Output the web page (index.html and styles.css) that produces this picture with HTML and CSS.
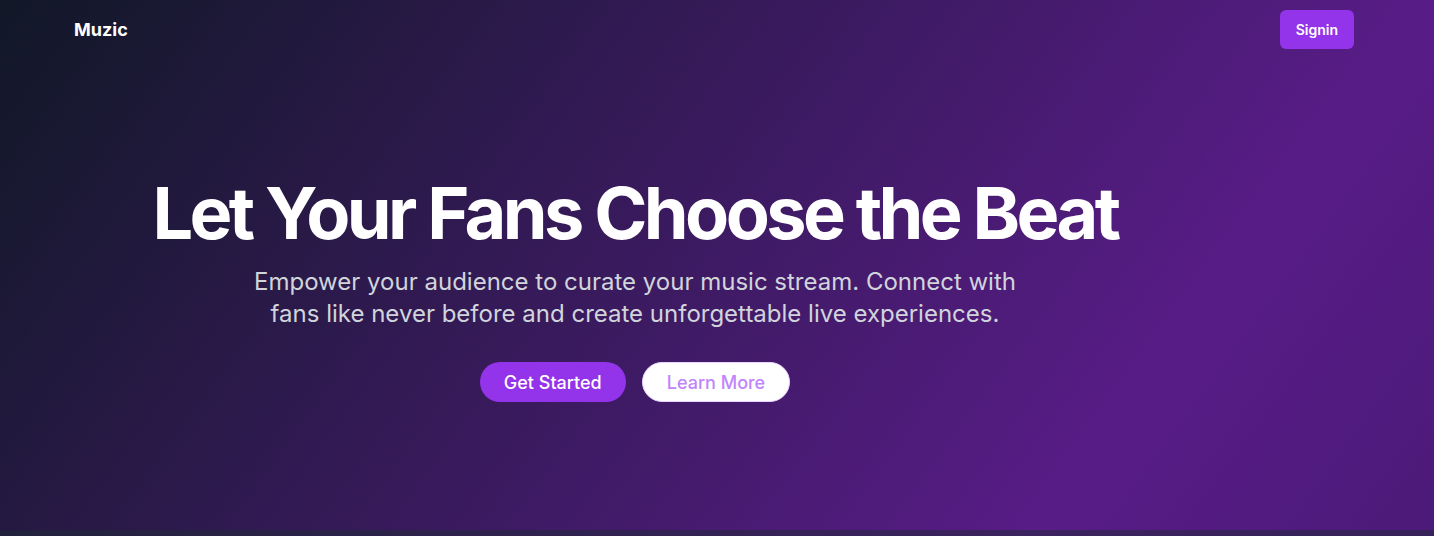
FILE: index.html
```html
<!DOCTYPE html>
<html lang="en">
<head>
<meta charset="utf-8">
<title>Muzic</title>
<link rel="stylesheet" href="styles.css">
</head>
<body>
<div class="page">
  <header class="header">
    <a class="logo" href="#">Muzic</a>
    <button class="signin">Signin</button>
  </header>
  <main class="hero">
    <div class="hero-inner">
      <h1 class="title">Let Your Fans Choose the Beat</h1>
      <p class="subtitle">Empower your audience to curate your music stream. Connect with fans like never before and create unforgettable live experiences.</p>
      <div class="actions">
        <button class="btn btn-primary">Get Started</button>
        <button class="btn btn-outline">Learn More</button>
      </div>
    </div>
  </main>
  <section class="features"></section>
</div>
</body>
</html>
```
FILE: styles.css
```css
* { box-sizing: border-box; }
html, body { margin: 0; padding: 0; }
body {
  font-family: Inter, "Noto Sans", sans-serif;
  color: #fff;
  background: #111827;
}
.page {
  min-height: 1954px;
  background: linear-gradient(to bottom right, #111827 0%, #581c87 50%, #2a1552 100%);
}
.header {
  height: 59px;
  display: flex;
  align-items: center;
  justify-content: space-between;
  padding: 0 80px 0 74px;
}
.logo {
  font-size: 18px;
  line-height: 28px;
  font-weight: 700;
  color: #fff;
  text-decoration: none;
}
.signin {
  height: 39px;
  padding: 0 16px;
  border: none;
  border-radius: 6px;
  background: #9333ea;
  color: #fff;
  font-family: inherit;
  font-size: 14px;
  font-weight: 600;
}
.hero {
  height: 471px;
  padding-right: 164px;
}
.hero-inner {
  display: flex;
  flex-direction: column;
  align-items: center;
  text-align: center;
  padding-top: 118px;
}
.title {
  margin: 0;
  font-size: 72px;
  line-height: 72px;
  font-weight: 700;
  letter-spacing: -0.05em;
}
.subtitle {
  margin: 17px 0 0;
  max-width: 768px;
  font-size: 24px;
  line-height: 32px;
  color: #d1d5db;
}
.actions {
  margin-top: 32px;
  display: flex;
  gap: 16px;
}
.btn {
  height: 40px;
  padding: 0 24px;
  border-radius: 9999px;
  font-family: inherit;
  font-size: 18px;
  font-weight: 500;
}
.btn-primary {
  background: #9333ea;
  color: #fff;
  border: none;
}
.btn-outline {
  background: #fff;
  color: #c084fc;
  border: 1px solid #e9d5ff;
}
.features {
  height: 400px;
  background: rgba(31, 41, 55, 0.5);
}
```
